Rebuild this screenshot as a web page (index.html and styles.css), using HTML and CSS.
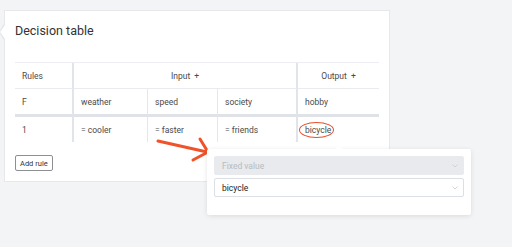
FILE: index.html
```html
<!DOCTYPE html>
<html lang="en">

<head>
    <meta charset="UTF-8">
    <meta name="viewport" content="width=device-width, initial-scale=1.0">
    <title>Decision table</title>
    <link rel="stylesheet" href="styles.css">
</head>

<body>
    <div class="card">
        <h1 class="card-title">Decision table</h1>

        <table class="decision-table">
            <colgroup>
                <col class="col-rules">
                <col class="col-weather">
                <col class="col-speed">
                <col class="col-society">
                <col class="col-output">
            </colgroup>
            <tr class="row-head">
                <td class="sep-thick">Rules</td>
                <td class="sep-thick center" colspan="3">Input <span class="plus">+</span></td>
                <td class="center">Output <span class="plus">+</span></td>
            </tr>
            <tr class="row-names">
                <td class="sep-thick">F</td>
                <td class="sep">weather</td>
                <td class="sep">speed</td>
                <td class="sep-thick">society</td>
                <td>hobby</td>
            </tr>
            <tr class="row-rule">
                <td class="sep-thick">1</td>
                <td class="sep">= cooler</td>
                <td class="sep">= faster</td>
                <td class="sep-thick">= friends</td>
                <td><span class="circled">bicycle</span></td>
            </tr>
        </table>

        <button class="add-rule">Add rule</button>
    </div>

    <!-- annotation arrow pointing at the popover -->
    <svg class="pointer-arrow" width="70" height="40" viewBox="0 0 70 40">
        <polyline points="8,11 57,22" fill="none" stroke="#f0532a" stroke-width="3" stroke-linecap="round" />
        <polyline points="50,9 58,22 43,30" fill="none" stroke="#f0532a" stroke-width="3" stroke-linecap="round" stroke-linejoin="round" />
    </svg>

    <div class="popover">
        <div class="field field-disabled">
            <span>Fixed value</span>
            <svg class="chevron" width="6" height="4" viewBox="0 0 6 4">
                <polyline points="0.5,0.5 3,3 5.5,0.5" fill="none" stroke="#c9ccd0" stroke-width="0.8" />
            </svg>
        </div>
        <div class="field">
            <span>bicycle</span>
            <svg class="chevron" width="6" height="4" viewBox="0 0 6 4">
                <polyline points="0.5,0.5 3,3 5.5,0.5" fill="none" stroke="#c9ccd0" stroke-width="0.8" />
            </svg>
        </div>
    </div>
</body>

</html>
```

FILE: styles.css
```css
body {
    margin: 0;
    background: #f3f4f6;
    font-family: Roboto, "Liberation Sans", sans-serif;
    color: #333;
}

.card {
    position: relative;
    box-sizing: border-box;
    width: 386px;
    margin: 10px 0 0 4px;
    padding: 12px 10px 10px 10px;
    background: white;
    border: 1px solid #e7e8eb;
}

/* little notch on the left side of the card */
.card::before,
.card::after {
    content: '';
    position: absolute;
    width: 0;
    height: 0;
    border-style: solid;
    border-color: transparent;
}

.card::before {
    left: -6px;
    top: 13px;
    border-width: 8px 5px 8px 0;
    border-right-color: #e3e4e7;
}

.card::after {
    left: -5px;
    top: 14px;
    border-width: 7px 5px 7px 0;
    border-right-color: white;
}

.card-title {
    margin: 0;
    font-size: 12.5px;
    font-weight: 400;
    line-height: 16px;
    color: #333;
}

.decision-table {
    width: 364px;
    margin-top: 23px;
    table-layout: fixed;
    border-collapse: separate;
    border-spacing: 0;
    border-top: 1px solid #eceef1;
    font-size: 8.5px;
    color: #4a4a4a;
}

.col-rules { width: 59px; }
.col-weather { width: 74px; }
.col-speed { width: 70px; }
.col-society { width: 80px; }
.col-output { width: 81px; }

.decision-table td {
    box-sizing: border-box;
    padding: 0 7px;
    vertical-align: middle;
    white-space: nowrap;
    color: #4a4a4a;
}

.decision-table td.center {
    text-align: center;
}

.decision-table td.sep {
    border-right: 1px solid #e4e7eb;
}

.decision-table td.sep-thick {
    border-right: 2px solid #e1e4e8;
}

.row-head td {
    height: 26px;
    border-bottom: 1px solid #e9ebee;
}

.row-names td {
    height: 28px;
    border-bottom: 3px solid #dfe2e6;
}

.row-rule td {
    height: 25px;
}

.plus {
    margin-left: 2px;
}

.circled {
    position: relative;
}

.circled::after {
    content: '';
    position: absolute;
    left: -6px;
    right: -3px;
    top: -3px;
    bottom: -3px;
    border: 1px solid #ea4e2b;
    border-radius: 50%;
}

.add-rule {
    display: block;
    box-sizing: border-box;
    height: 16px;
    margin-top: 13px;
    padding: 0 4px;
    background: white;
    border: 1px solid #8d8f93;
    border-radius: 2px;
    font-family: inherit;
    font-size: 7.5px;
    color: #333;
}

.pointer-arrow {
    position: absolute;
    left: 150px;
    top: 130px;
}

.popover {
    position: absolute;
    left: 207px;
    top: 149px;
    box-sizing: border-box;
    width: 264px;
    height: 66px;
    padding: 7px;
    display: flex;
    flex-direction: column;
    gap: 3px;
    background: white;
    border-radius: 2px;
    box-shadow: 0 1px 5px rgba(0, 0, 0, 0.1);
}

.popover::before {
    content: '';
    position: absolute;
    left: 128px;
    top: -3px;
    width: 0;
    height: 0;
    border-style: solid;
    border-width: 0 4px 3px 4px;
    border-color: transparent transparent white transparent;
}

.field {
    box-sizing: border-box;
    height: 19px;
    display: flex;
    align-items: center;
    justify-content: space-between;
    padding: 0 5px 0 7px;
    border: 1px solid #dcdfe3;
    border-radius: 2px;
    font-size: 8.5px;
    color: #222;
}

.field-disabled {
    background: #e8eaed;
    border-color: #e8eaed;
    color: #b7bbc1;
}
```
